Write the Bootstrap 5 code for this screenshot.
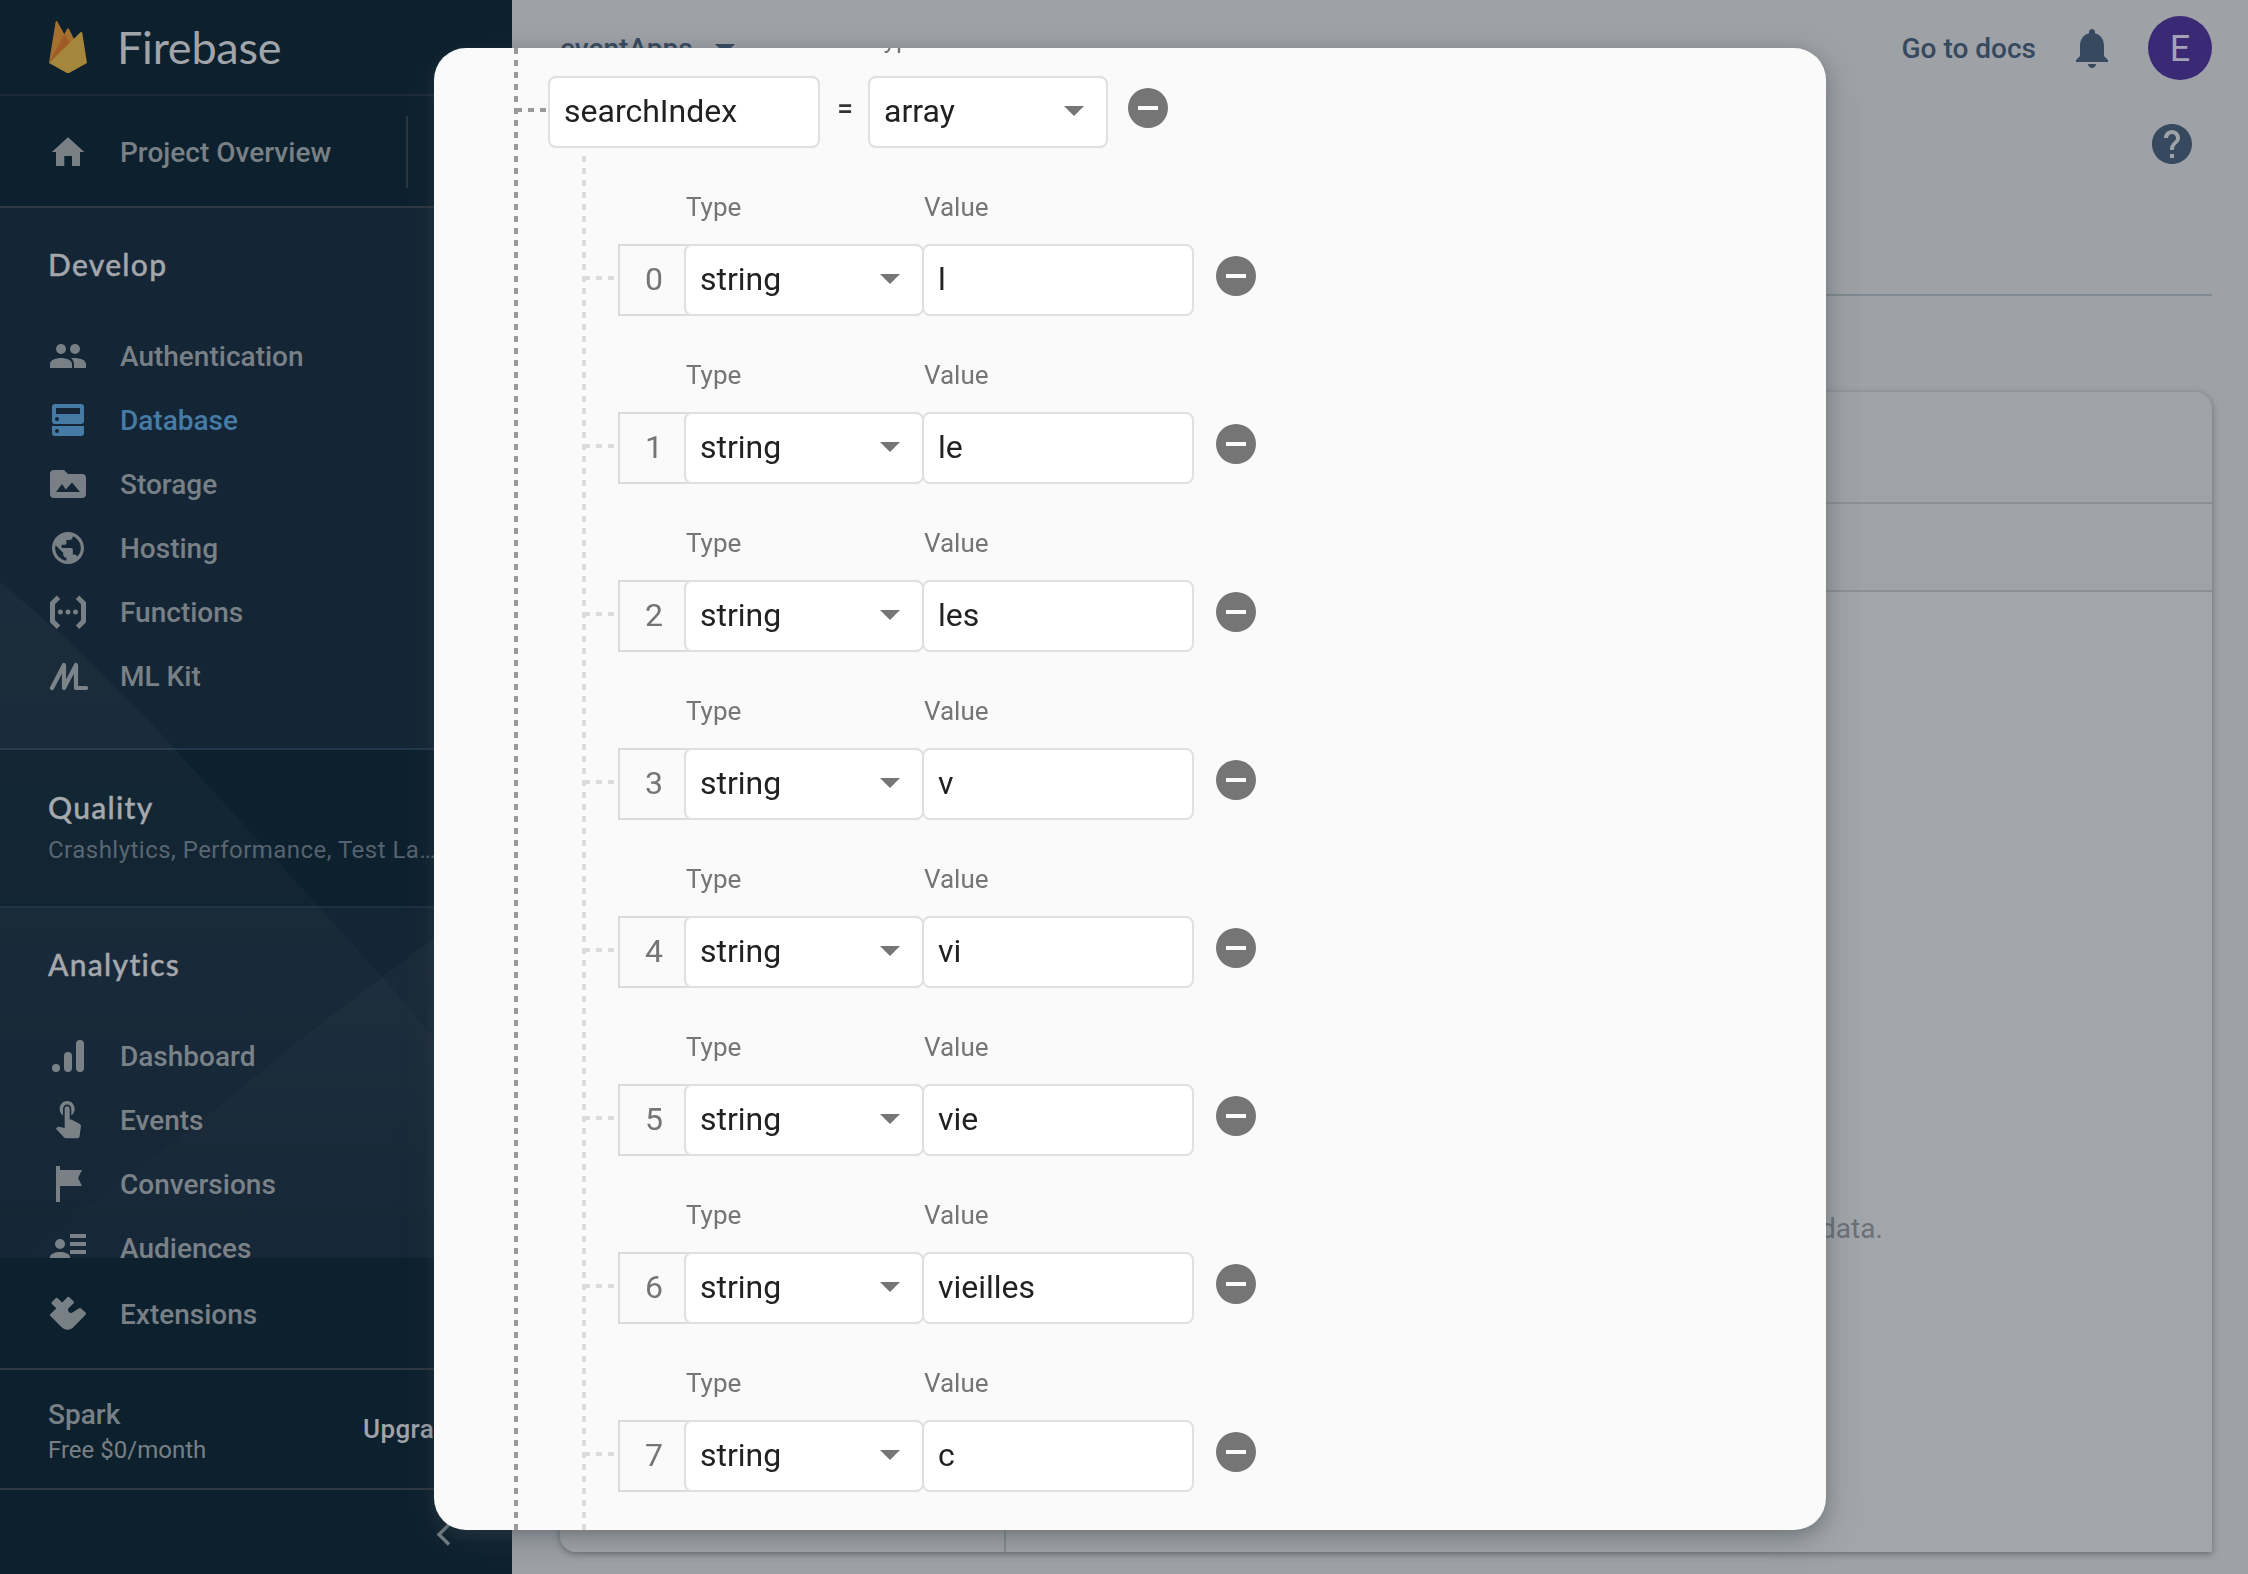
<!DOCTYPE html>
<html lang="en">
<head>
<meta charset="utf-8">
<title>Firebase console – Database</title>
<link href="https://cdn.jsdelivr.net/npm/bootstrap@5.3.0/dist/css/bootstrap.min.css" rel="stylesheet">
<style>
body{font-family:Roboto,"Liberation Sans",sans-serif;background:#9ea1a6;height:1574px;overflow:hidden;color:#212121}
svg{display:block;flex:none}
.sidebar{width:512px;height:1574px;background:#0d202e;color:#788086;flex:none}
.backdrop-shape{left:0;top:0;pointer-events:none}
.brand{height:96px;padding-left:48px;border-bottom:2px solid #1e2b36}
.brand-name{font-family:Lato,sans-serif;font-size:45px;line-height:94px;letter-spacing:-.25px;color:#a1a4a9;margin-left:27px}
.item{height:64px;padding:2px 0 0 48px;font-size:28px;font-weight:500;line-height:64px;color:#788086}
.item svg{margin:-2px 32px 0 0}
.item.on{color:#467ba6}
.overview{height:112px;border-bottom:2px solid #303842}
.overview .item{width:408px;height:72px;margin-top:2px;line-height:72px;border-right:2px solid #2a3640}
.scroller{height:1050px;overflow:hidden}
.group{background:#142535}
.group-title{font-family:Lato,sans-serif;font-weight:500;font-size:30px;line-height:112px;letter-spacing:1.3px;padding-left:48px;margin:0 0 4px;color:#a3a6aa;-webkit-text-stroke:.4px #a3a6aa}
.develop{height:542px;border-bottom:2px solid #21384e}
.quality{height:158px;padding-top:40px;border-bottom:2px solid #1b3042}
.quality .group-title{line-height:34px;margin-bottom:10px}
.quality-sub{font-size:24px;line-height:32px;padding-left:48px;color:#56626c;white-space:nowrap;letter-spacing:.48px}
.ext{height:112px;border-bottom:2px solid #303842}
.ext .item{margin-top:2px}
.ext svg{margin-top:-4px}
.plan{height:120px;padding:0 48px;border-bottom:2px solid #303842}
.plan-side{width:116px;padding-top:7px}
.plan-name{font-size:28px;font-weight:500;line-height:36px}
.plan-cost{font-size:24px;line-height:35px}
.plan-up{font-size:26px;font-weight:500;color:#a1a4a9;line-height:36px;margin-left:199px;letter-spacing:.4px}
.foot{height:84px;padding:5px 0 0 432px}
.topbar{height:96px;padding:0 36px 0 48px;font-size:28px;font-weight:500;color:#36495f;gap:32px}
.topbar span{padding-top:2px}
.avatar{width:64px;height:64px;border-radius:50%;background:#3a2a75;color:#a5a2b5;font-size:36px;font-weight:400;padding-top:2px}
.page-head{height:200px;margin-right:36px;border-bottom:2px solid #7f8991;padding:24px 16px 0 0}
.panel{margin:96px 36px 0 48px;height:1160px;background:#9fa2a6;border-radius:16px 16px 0 16px;box-shadow:0 2px 6px rgba(50,55,60,.5)}
.panel-head{height:112px;border-bottom:2px solid #8c9094}
.panel-tabs{height:88px;border-bottom:2px solid #8c9094}
.panel-body{height:960px;background:#a2a5a9;border-radius:0 0 0 16px}
.panel-list{width:446px;border-right:2px solid #888c90}
.panel-note{font-size:28px;color:#6d7074;line-height:36px}
.modal-dialog.editor{width:1392px;max-width:none;margin:48px 0 0 434px}
.editor .modal-content{height:1482px;border:0;border-radius:32px;overflow:hidden;color:#212121;
 background:repeating-linear-gradient(#9a9a9a 0 6px,transparent 6px 12px) 80px 0/4px 100% no-repeat,#fafafa;
 box-shadow:0 5px 14px rgba(60,72,76,.3),0 10px 34px rgba(62,72,80,.28)}
.tree{margin:-56px 0 0 82px}
.entry{height:168px;padding-top:31px}
.entry.root{height:164px}
.lbl{font-size:26px;line-height:32px;height:53px;color:#757575}
.tick{width:30px;height:4px;margin-top:-4px;background:repeating-linear-gradient(90deg,#9a9a9a 0 6px,transparent 6px 12px)}
.kids{margin-left:66px;padding-top:4px;background:repeating-linear-gradient(#dcdcdc 0 6px,transparent 6px 12px) 0 0/4px 100% no-repeat}
.kids .tick{margin-left:2px;background:repeating-linear-gradient(90deg,#dcdcdc 0 6px,transparent 6px 12px)}
.box{height:72px;background:#fff;border:2px solid #e0e0e0;border-radius:8px;font-size:32px;line-height:66px;padding:0 14px 2px;color:#212121}
.w-in{width:272px}.w-sel{width:240px;padding-right:22px}
.idx{width:74px;height:72px;border:2px solid #dcdcdc;margin:0 -8px 0 4px;font-size:32px;line-height:66px;padding-right:2px;text-align:center;color:#757575}
.eq{width:48px;padding-left:2px;text-align:center;font-size:28px;font-weight:500;line-height:66px;height:72px;color:#333}
.caret{width:0;height:0;border:10px solid transparent;border-top-color:#757575;border-bottom:0}
.rm{margin:-8px 0 0 16px}
</style>
<script src="https://cdn.jsdelivr.net/npm/bootstrap@5.3.0/dist/js/bootstrap.bundle.min.js"></script>
</head>
<body>
<div class="d-flex">
 <aside class="sidebar d-flex flex-column position-relative">
  <div class="brand d-flex align-items-center">
   <svg width="42" height="54" viewBox="48 19 42 54"><path d="M49 62L55.6 21q.9-2 2 0L68 40z" fill="#a5702e"/><path d="M49 62L67 28q1-1.600 2 0l7 14z" fill="#a5702e"/><path d="M49 62L64.500 33 72 46z" fill="#a05a28"/><path d="M49 62L80.500 31.300q1.500-1 1.800.8L87 62 70 71.400q-2 1-4 0z" fill="#a4873a"/></svg>
   <span class="brand-name">Firebase</span>
  </div>
  <div class="overview d-flex align-items-center">
   <div class="item d-flex align-items-center"><svg width="40" height="40" fill="currentColor"><path d="M8 34V20H3.800L20 5.300 36.300 20H32v14h-8V24h-7.700v10z"/></svg>Project Overview</div>
  </div>
  <div class="scroller">
   <nav class="group develop">
    <h2 class="group-title">Develop</h2>
    <div class="item d-flex align-items-center"><svg width="40" height="40" fill="currentColor"><circle cx="13" cy="13" r="5"/><circle cx="27" cy="13" r="5"/><path d="M2 32v-4c0-4 6-6 11-6s11 2 11 6v4zM26 32v-4c0-2.500-1.200-4.500-3-6 8-.5 15 1.500 15 6v4z"/></svg>Authentication</div>
    <div class="item on d-flex align-items-center"><svg width="40" height="40" fill="currentColor" fill-rule="evenodd"><path d="M7 4h26q3 0 3 3v14q0 3-3 3H7q-3 0-3-3V7q0-3 3-3zm1 4v6h24V8zm1 9a2 2 0 100 4 2 2 0 000-4zM4 26h32v7q0 3-3 3H7q-3 0-3-3zm5 3a2 2 0 100 4 2 2 0 000-4z"/></svg>Database</div>
    <div class="item d-flex align-items-center"><svg width="40" height="40" fill="currentColor" fill-rule="evenodd"><path d="M6 6h10l4 4h14q4 0 4 4v16q0 4-4 4H6q-4 0-4-4V10q0-4 4-4zm2 22h24l-8-9.600-6.200 7L14 20z"/></svg>Storage</div>
    <div class="item d-flex align-items-center"><svg width="40" height="40" fill="currentColor"><path transform="translate(.8 .8) scale(1.6)" d="M12 2C6.480 2 2 6.480 2 12s4.480 10 10 10 10-4.480 10-10S17.520 2 12 2zm-1 17.930c-3.950-.49-7-3.850-7-7.930 0-.62.08-1.210.21-1.790L9 15v1c0 1.100.9 2 2 2v1.930zm6.900-2.540c-.26-.81-1-1.390-1.900-1.390h-1v-3c0-.55-.45-1-1-1H8v-2h2c.55 0 1-.45 1-1V7h2c1.100 0 2-.9 2-2v-.41c2.930 1.190 5 4.060 5 7.410 0 2.080-.8 3.970-2.100 5.390z"/></svg>Hosting</div>
    <div class="item d-flex align-items-center"><svg width="40" height="40" fill="currentColor"><path d="M10.500 5.300L4.500 11.200v18l6 6M29.500 5.300l6 5.900v18l-6 6" fill="none" stroke="currentColor" stroke-width="5"/><circle cx="12.400" cy="20" r="2.500"/><circle cx="20" cy="20" r="2.500"/><circle cx="27.500" cy="20" r="2.500"/></svg>Functions</div>
    <div class="item d-flex align-items-center"><svg width="40" height="40" fill="none" stroke="currentColor" stroke-width="4.200" stroke-linecap="round" stroke-linejoin="round"><path d="M4 32L16 9v23L28 9v23h10"/></svg>ML Kit</div>
   </nav>
   <div class="quality">
    <h2 class="group-title">Quality</h2>
    <div class="quality-sub">Crashlytics, Performance, Test La…</div>
   </div>
   <nav class="group">
    <h2 class="group-title">Analytics</h2>
    <div class="item d-flex align-items-center"><svg width="40" height="40" fill="currentColor"><circle cx="8" cy="32" r="4"/><rect x="16" y="16" width="8" height="20" rx="4"/><rect x="28" y="4" width="8" height="32" rx="4"/></svg>Dashboard</div>
    <div class="item d-flex align-items-center"><svg width="40" height="40" fill="currentColor"><path transform="translate(0 -4.300) scale(1.667 1.770)" d="M9 11.240V7.500C9 6.120 10.120 5 11.500 5S14 6.120 14 7.500v3.740c1.210-.81 2-2.180 2-3.740C16 5.010 13.990 3 11.500 3S7 5.010 7 7.500c0 1.560.79 2.930 2 3.740zm9.840 4.630l-4.540-2.260c-.17-.07-.35-.11-.54-.11H13v-6c0-.83-.67-1.500-1.500-1.500S10 6.670 10 7.500v10.740l-3.430-.72c-.08-.01-.15-.03-.24-.03-.31 0-.59.13-.79.33l-.79.8 4.940 4.940c.27.27.65.44 1.060.44h6.790c.75 0 1.330-.55 1.440-1.280l.75-5.270c.01-.07.02-.14.02-.2 0-.62-.38-1.160-.91-1.380z"/></svg>Events</div>
    <div class="item d-flex align-items-center"><svg width="40" height="40" fill="currentColor"><path d="M8 2h4v4h22l-4 8 4 8H12v16H8z"/></svg>Conversions</div>
    <div class="item d-flex align-items-center"><svg width="40" height="40" fill="currentColor"><circle cx="12" cy="16" r="5"/><path d="M2 34v-5c0-3 5-5 10-5s10 2 10 5v5zM22 6h16v4H22zM22 14h16v4H22zM22 22h16v4H22z"/></svg>Audiences</div>
   </nav>
  </div>
  <div class="ext d-flex align-items-center">
   <div class="item d-flex align-items-center"><svg width="40" height="40" fill="currentColor" stroke="currentColor" stroke-width="3" stroke-linejoin="round"><path d="M3.500 22L10.500 15.300 5 10l3.700-3.700 5.600 5.500 6-6.500 4.200 4-5.800 5.700c-1 4 2 7 5.600 6.300L32 16.500l4.500 4.200L24 33.500q-4.500 3.500-9 0z"/></svg>Extensions</div>
  </div>
  <div class="plan d-flex align-items-center">
   <div class="plan-side text-nowrap"><div class="plan-name">Spark</div><div class="plan-cost">Free $0/month</div></div>
   <div class="plan-up">Upgrade</div>
  </div>
  <div class="foot"><svg width="24" height="78" viewBox="0 0 24 78" fill="none" stroke="currentColor" stroke-width="3.400"><path d="M17 29.500L7 39.500l10 10"/></svg></div>
  <svg class="backdrop-shape position-absolute" width="512" height="1258" viewBox="0 0 512 1258"><defs><linearGradient id="fadeA" x1="0" y1="582" x2="0" y2="1258" gradientUnits="userSpaceOnUse"><stop offset="0" stop-color="#fff" stop-opacity=".034"/><stop offset=".5" stop-color="#fff" stop-opacity=".022"/><stop offset="1" stop-color="#fff" stop-opacity=".005"/></linearGradient><linearGradient id="fadeB" x1="0" y1="900" x2="0" y2="1258" gradientUnits="userSpaceOnUse"><stop offset="0" stop-color="#fff" stop-opacity=".03"/><stop offset="1" stop-color="#fff" stop-opacity=".004"/></linearGradient></defs><path d="M0 582L60 633 148 720 320 908 382 977 512 1130V1258H0z" fill="url(#fadeA)"/><path d="M512 882L434 938 300 1040 200 1122 20 1258H512z" fill="url(#fadeB)"/></svg>
 </aside>

 <main class="flex-grow-1">
  <header class="topbar d-flex align-items-center">
   <div class="d-flex align-items-center me-auto"><span>eventApps</span><svg style="margin:2px 0 0 22px" width="20" height="10" fill="currentColor"><path d="M0 0h20L10 10z"/></svg></div>
   <span>Go to docs</span>
   <svg width="48" height="48" viewBox="0 0 24 24" fill="currentColor"><path d="M12 22c1.100 0 2-.9 2-2h-4c0 1.100.89 2 2 2zm6-6v-5c0-3.070-1.640-5.640-4.500-6.320V4c0-.83-.67-1.500-1.500-1.500s-1.500.67-1.500 1.500v.68C7.630 5.360 6 7.920 6 11v5l-2 2v1h16v-1l-2-2z"/></svg>
   <div class="avatar d-flex align-items-center justify-content-center">E</div>
  </header>
  <div class="page-head d-flex justify-content-end"><svg width="48" height="48" viewBox="0 0 24 24" fill="#36495f"><path d="M12 2C6.480 2 2 6.480 2 12s4.480 10 10 10 10-4.480 10-10S17.520 2 12 2zm1 17h-2v-2h2v2zm2.070-7.750l-.9.920C13.450 12.900 13 13.500 13 15h-2v-.5c0-1.100.45-2.100 1.170-2.830l1.240-1.260c.37-.36.590-.86.590-1.410 0-1.100-.9-2-2-2s-2 .9-2 2H8c0-2.210 1.790-4 4-4s4 1.790 4 4c0 .88-.36 1.680-.93 2.250z"/></svg></div>
  <section class="panel">
   <div class="panel-head"></div>
   <div class="panel-tabs"></div>
   <div class="panel-body d-flex">
    <div class="panel-list"></div>
    <div class="flex-grow-1 text-center" style="padding:619px 0 0 2px"><span class="panel-note">Your database is ready to go. Just add data.</span></div>
   </div>
  </section>
 </main>
</div>

<div class="modal d-block overflow-hidden" tabindex="-1">
 <div class="modal-dialog editor">
  <div class="modal-content d-block">
   <div class="tree">
    <div class="entry root">
     <div class="lbl" style="padding-left:353px">Type</div>
     <div class="d-flex align-items-center">
      <span class="tick"></span>
      <div class="box w-in" style="margin-left:2px">searchIndex</div>
      <span class="eq">=</span>
      <div class="box w-sel d-flex align-items-center justify-content-between">array<i class="caret"></i></div>
      <svg class="rm" width="48" height="48" viewBox="0 0 24 24" fill="#757575"><path d="M12 2a10 10 0 100 20 10 10 0 000-20zm5 11H7v-2h10z"/></svg>
     </div>
    </div>
    <div class="kids" id="kids"></div>
   </div>
  </div>
 </div>
</div>
<script>
const values = ["l", "le", "les", "v", "vi", "vie", "vieilles", "c"];
document.getElementById("kids").innerHTML = values.map((v, i) => `
<div class="entry">
 <div class="lbl d-flex" style="padding-left:104px"><span style="width:238px">Type</span><span>Value</span></div>
 <div class="d-flex align-items-center">
  <span class="tick"></span>
  <div class="idx">${i}</div>
  <div class="box w-sel d-flex align-items-center justify-content-between">string<i class="caret"></i></div>
  <div class="box w-in" style="margin-left:-2px">${v}</div>
  <svg class="rm" style="margin-left:18px" width="48" height="48" viewBox="0 0 24 24" fill="#757575"><path d="M12 2a10 10 0 100 20 10 10 0 000-20zm5 11H7v-2h10z"/></svg>
 </div>
</div>`).join("") + '<div class="entry"></div>';
</script>
</body>
</html>
